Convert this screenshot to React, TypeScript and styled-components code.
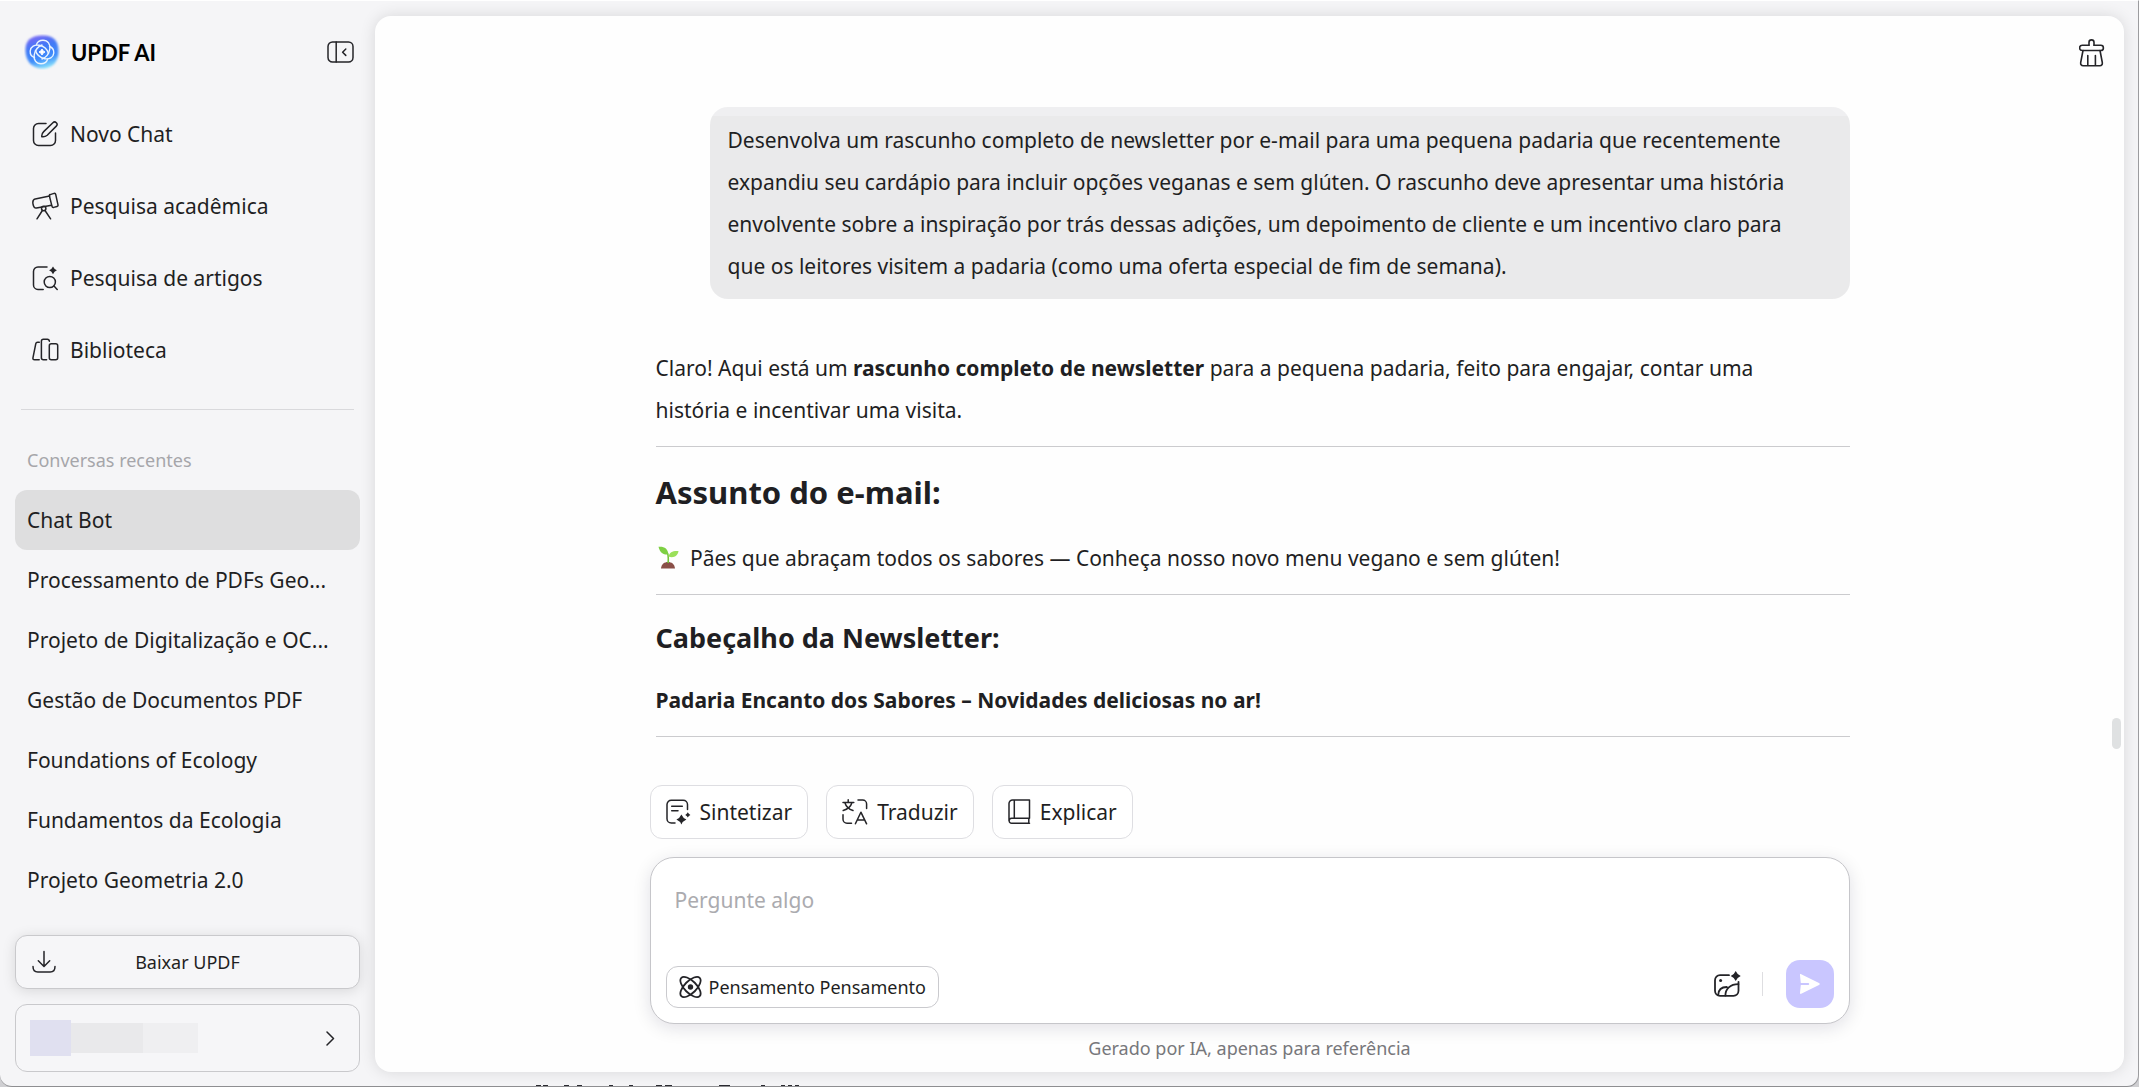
import React from "react";
import styled, { createGlobalStyle } from "styled-components";

const GlobalStyle = createGlobalStyle`
  *, *::before, *::after { box-sizing: border-box; }
  body {
    margin: 0;
    background: #cfcfd2;
    color: #1f1f23;
    font-family: "Noto Sans", "Open Sans", sans-serif;
    font-size: 21px;
  }
  button, textarea { font: inherit; color: inherit; }
  button { cursor: pointer; }
`;

/* ---------- window frame ---------- */

const Window = styled.div`
  position: relative;
  display: grid;
  grid-template-columns: 375px minmax(0, 1fr);
  min-height: 100vh;
  background: #f5f5f7;
  border-top: 1px solid #ffffff;
  border-right: 1px solid #9c9c9f;
  border-bottom: 1px solid #8e8e91;
  border-radius: 0 0 12px 12px;
  overflow: hidden;
`;

const Behind = styled.svg`
  position: absolute;
  left: 535px;
  bottom: 0;
`;

/* ---------- sidebar ---------- */

const Sidebar = styled.aside`
  display: flex;
  flex-direction: column;
  padding: 33px 15px 14px;
`;

const BrandRow = styled.header`
  display: flex;
  align-items: center;
  height: 36px;
  padding: 0 6px 0 9px;
`;

const BrandName = styled.span`
  flex: 1;
  padding-left: 11px;
  color: #000;
  font-family: Lato, Inter, sans-serif;
  font-size: 22px;
  font-weight: 700;
`;

const IconButton = styled.button`
  display: flex;
  padding: 0;
  border: 0;
  background: none;
`;

const Nav = styled.nav`
  display: flex;
  flex-direction: column;
  margin-top: 28px;
`;

const NavItem = styled.button`
  display: grid;
  grid-template-columns: 26px 1fr;
  align-items: center;
  gap: 12px;
  height: 72px;
  padding: 0 17px;
  border: 0;
  background: none;
  text-align: left;
`;

const Divider = styled.hr`
  width: calc(100% - 12px);
  height: 1px;
  margin: 23px 6px 35px;
  border: 0;
  background: #d9d9dc;
`;

const SectionTitle = styled.h2`
  margin: 0 12px 15px;
  color: #a6a6aa;
  font-size: 18px;
  font-weight: 400;
  line-height: 30px;
`;

const ChatList = styled.ul`
  flex: 1;
  margin: 0;
  padding: 0;
  list-style: none;
`;

const ChatItem = styled.button<{ $active?: boolean }>`
  display: block;
  width: 100%;
  height: 60px;
  padding: 0 12px;
  border: 0;
  border-radius: 12px;
  background: ${(p) => (p.$active ? "#dededf" : "none")};
  text-align: left;
  white-space: nowrap;
  overflow: hidden;
  text-overflow: ellipsis;
`;

const DownloadButton = styled.button`
  display: grid;
  grid-template-columns: 24px 1fr 24px;
  align-items: center;
  height: 54px;
  margin-bottom: 15px;
  padding: 0 16px;
  border: 1px solid #c9c9cc;
  border-radius: 12px;
  background: #f6f6f8;
  box-shadow: 0 2px 14px rgba(0, 0, 0, 0.12);
  font-size: 18px;
`;

const AccountButton = styled.button`
  display: flex;
  align-items: center;
  height: 68px;
  padding: 0 24px 0 14px;
  border: 1px solid #c9c9cc;
  border-radius: 12px;
  background: #f6f6f8;
`;

const Redacted = styled.span`
  flex: 1;
  display: flex;
  align-items: center;
`;

const Block = styled.span<{ $w: number; $h: number; $c: string }>`
  width: ${(p) => p.$w}px;
  height: ${(p) => p.$h}px;
  background: ${(p) => p.$c};
`;

/* ---------- main panel ---------- */

const Panel = styled.main`
  position: relative;
  display: flex;
  flex-direction: column;
  margin: 15px 14px 14px 0;
  border-radius: 16px;
  background: #fefefe;
  box-shadow: 0 0 16px rgba(0, 0, 0, 0.12);
`;

const PanelHeader = styled.header`
  display: flex;
  align-items: flex-start;
  justify-content: flex-end;
  height: 91px;
  padding: 23px 19px 0;
`;

const ScrollThumb = styled.div`
  position: absolute;
  top: 702px;
  right: 3px;
  width: 9px;
  height: 31px;
  border-radius: 5px;
  background: #dfe1e2;
`;

const Column = styled.div`
  display: flex;
  flex-direction: column;
  flex: 1;
  width: 100%;
  max-width: 1200px;
  margin: 0 auto;
`;

const Thread = styled.section`
  flex: 1;
  display: flex;
  flex-direction: column;
  padding-left: 6px;
`;

const UserBubble = styled.p`
  align-self: flex-end;
  max-width: 1140px;
  margin: 0;
  padding: 12px 32px 12px 18px;
  border-radius: 18px;
  background: linear-gradient(#efeff1 9px, #eaeaeb 9px);
  line-height: 42px;
`;

const Answer = styled.article`
  margin-top: 48px;
  line-height: 42px;

  p { margin: 0; max-width: 1160px; }
  h2 { margin: 21px 0; font-size: 31px; line-height: 48px; }
  h3 { margin: 21px 0 19px; font-size: 27px; line-height: 44px; }
  hr { height: 1px; margin: 15px 0 0; border: 0; background: #cbcbce; }
`;

const Emoji = styled.svg`
  margin: 0 6px 0 2px;
  vertical-align: -3px;
`;

const Chips = styled.div`
  display: flex;
  gap: 18px;
  margin-bottom: 18px;
`;

const Chip = styled.button`
  display: flex;
  align-items: center;
  gap: 9px;
  height: 54px;
  padding: 0 15px;
  border: 1px solid #dedee2;
  border-radius: 12px;
  background: #fff;
`;

const Composer = styled.form`
  display: flex;
  flex-direction: column;
  height: 167px;
  padding: 21px 15px 15px;
  border: 1px solid #c6c6ca;
  border-radius: 24px;
  background: #fff;
  box-shadow: 0 4px 18px rgba(20, 10, 50, 0.12);
`;

const Prompt = styled.textarea`
  flex: 1;
  width: 100%;
  padding: 0 9px;
  border: 0;
  outline: 0;
  background: none;
  line-height: 42px;
  resize: none;
  overflow: hidden;
  &::placeholder { color: #ababaf; opacity: 1; }
`;

const Tools = styled.div`
  display: flex;
  align-items: flex-end;
`;

const ThinkButton = styled.button`
  display: flex;
  align-items: center;
  gap: 7px;
  height: 42px;
  padding: 0 12px;
  border: 1px solid #cacace;
  border-radius: 12px;
  background: #fff;
  font-size: 18px;
`;

const Actions = styled.div`
  display: flex;
  align-items: center;
  margin-left: auto;
`;

const Separator = styled.span`
  width: 1px;
  height: 24px;
  margin: 0 23px 0 21px;
  background: #dedee1;
`;

const SendButton = styled.button`
  display: flex;
  align-items: center;
  justify-content: center;
  width: 48px;
  height: 48px;
  padding: 0;
  border: 0;
  border-radius: 14px;
  background: #c9c6ff;
`;

const Disclaimer = styled.footer`
  margin: 12px 0;
  color: #77777b;
  font-size: 18px;
  line-height: 24px;
  text-align: center;
`;

/* ---------- icons ---------- */

type IconProps = { w: number; h: number; sw?: number; children: React.ReactNode };

const Icon = ({ w, h, sw = 1.5, children }: IconProps) => (
  <svg
    width={w}
    height={h}
    viewBox={`0 0 ${w} ${h}`}
    fill="none"
    stroke="#242428"
    strokeWidth={sw}
    strokeLinecap="round"
    strokeLinejoin="round"
    aria-hidden="true"
  >
    {children}
  </svg>
);

const Spark = ({ x, y, r }: { x: number; y: number; r: number }) => {
  const k = r * 0.3;
  return (
    <path
      fill="#242428"
      stroke="none"
      d={`M${x} ${y - r}Q${x + k} ${y - k} ${x + r} ${y}Q${x + k} ${y + k} ${x} ${y + r}Q${x - k} ${y + k} ${x - r} ${y}Q${x - k} ${y - k} ${x} ${y - r}Z`}
    />
  );
};

const LogoMark = () => (
  <svg width="36" height="36" viewBox="0 0 36 36" aria-hidden="true">
    <defs>
      <linearGradient id="logo-fill" x1="0.3" y1="0" x2="0.6" y2="1">
        <stop offset="0" stopColor="#7a68f4" />
        <stop offset="0.35" stopColor="#4179f6" />
        <stop offset="0.7" stopColor="#3f8dfb" />
        <stop offset="1" stopColor="#8be4fb" />
      </linearGradient>
      <filter id="logo-soft" x="-20%" y="-20%" width="140%" height="140%">
        <feGaussianBlur stdDeviation="1.1" />
      </filter>
    </defs>
    <path
      d="M18 1.5c11-.5 16.5 5 16.5 15.5 0 11-6 17.5-16 17.5S2 28 1.5 17C1 6 7 2 18 1.5z"
      fill="url(#logo-fill)"
      filter="url(#logo-soft)"
    />
    <g fill="none" stroke="#e9f4ff" strokeWidth="1.4" strokeLinecap="round">
      <path d="M12.5 10.5C13.5 7.5 16 6.3 19 6.3c5 0 7.5 4.2 6.8 8.7-.8 5-4 8.500-7.800 10" />
      <path d="M25.5 12.5c3 1 4.5 3.5 4.3 6.500-.4 4.500-4.600 6.600-9 5.700-5-1-8.200-4.400-9.300-8.200" />
      <path d="M23.5 25.5c-1 3-3.5 4.2-6.500 4.200-5 0-7.500-4.200-6.800-8.700.8-5 4-8.500 7.800-10" />
      <path d="M10.5 23.5c-3-1-4.500-3.500-4.300-6.500.4-4.500 4.600-6.600 9-5.700 5 1 8.200 4.400 9.300 8.200" />
    </g>
    <path d="M18 15Q18.7 17.3 21 18 18.7 18.7 18 21 17.3 18.7 15 18 17.3 17.3 18 15Z" fill="#fff" stroke="#fff" />
  </svg>
);

const CollapseIcon = () => (
  <Icon w={27} h={22}>
    <rect x="1" y="1" width="25" height="20" rx="4.5" />
    <path d="M9.2 1v20M18.800 8l-3.200 3.200 3.200 3.200" />
  </Icon>
);

const EditIcon = () => (
  <Icon w={26} h={26}>
    <path d="M14 2.500H6.500a5 5 0 0 0-5 5v12a5 5 0 0 0 5 5h12a5 5 0 0 0 5-5V12" />
    <path d="M9.800 15.700c-.3-2.200.4-3.600 1.900-5.100l9.200-8.900a2.400 2.400 0 0 1 3.400 3.400l-9.100 9.100c-1.400 1.300-3 1.900-5.400 1.500z" />
  </Icon>
);

const TelescopeIcon = () => (
  <Icon w={27} h={28}>
    <path d="M17.600 3.900 3.200 6.900C1 7.500.5 9.300 1 12c.5 2.900 1.600 4.400 3.500 4l15-2.800" />
    <path d="M18.200 2.600 22 1.400c.9-.2 1.500.1 1.700 1L26 12.800c.2.900-.2 1.500-1 1.700l-3.300.9c-.9.200-1.500-.1-1.700-1L17.400 4c-.2-.8 0-1.200.8-1.400z" />
    <circle cx="11.7" cy="16.5" r="2.2" />
    <path d="M10.400 18.500 5 26.800M13 18.500l5.600 8.300" />
  </Icon>
);

const ArticleSearchIcon = () => (
  <Icon w={26} h={26}>
    <path d="M15 2H6a4.500 4.500 0 0 0-4.500 4.500v13.400A4.500 4.500 0 0 0 6 24.400h5.200" />
    <circle cx="17.8" cy="17" r="5.6" />
    <path d="m22 21 3.200 3.400" />
    <Spark x={21} y={5.3} r={3.9} />
  </Icon>
);

const LibraryIcon = () => (
  <Icon w={27} h={26}>
    <path d="M7.300 5.300H5.600C4.600 5.300 4 5.700 3.800 6.700L1 20.600c-.3 1.400.2 2.100 1.600 2.100h4.600" />
    <path d="M14.600 22.700h-3.200a2 2 0 0 1-2-2V4.300a2 2 0 0 1 2-2h4a2 2 0 0 1 2 2" />
    <rect x="17.3" y="6.8" width="8.4" height="15.9" rx="2" />
  </Icon>
);

const DownloadIcon = () => (
  <Icon w={24} h={24}>
    <path d="M12 1.500v14.800M6.300 10.800 12 16.500l5.700-5.700M1 16.500c0 3.500 1.200 5.500 4.800 5.500h12.400c3.600 0 4.800-2 4.800-5.500" />
  </Icon>
);

const ChevronIcon = () => (
  <Icon w={9} h={15}>
    <path d="m1 1 6.500 6.500L1 14" />
  </Icon>
);

const BroomIcon = () => (
  <Icon w={26} h={28} sw={1.6}>
    <path d="M10 6.300V3.400a2.500 2.500 0 0 1 5 0v2.900" />
    <path d="M10 6.300H3.200a2.600 2.600 0 0 0 0 5.200h18.600a2.600 2.600 0 0 0 0-5.200H15" />
    <path d="m4 11.500-2.300 12c-.3 2 .5 3.200 2.500 3.200h16.600c2 0 2.800-1.200 2.500-3.200L21 11.500M8.800 16.500v10.200M16.400 16.500v10.200" />
  </Icon>
);

const SummaryIcon = () => (
  <Icon w={25} h={26}>
    <path d="M9 24H5.300A4.300 4.300 0 0 1 1 19.700V5.600a4.300 4.300 0 0 1 4.300-4.300h11.900a4.300 4.300 0 0 1 4.300 4.300v5" />
    <path d="M5.700 7.300h10.600M5.700 11.800h6.300" />
    <Spark x={15.4} y={20.5} r={5} />
    <Spark x={21.8} y={15.9} r={2.6} />
  </Icon>
);

const TranslateIcon = () => (
  <Icon w={26} h={26}>
    <path d="M6.200.8v2.600M1 3.600h10.800M3 4c1 3.400 4 6.300 8 7.500M9.800 4c-1 3.400-4.300 6.300-8.600 7.500" />
    <path d="M16 1h4.600a4 4 0 0 1 4 4v4.500M1 15.800v4.400a4 4 0 0 0 4 4h4.500" />
    <path d="m13.400 24.800 5.500-11.600 5.700 11.600M15.200 21h7.600" />
  </Icon>
);

const BookIcon = () => (
  <Icon w={23} h={26}>
    <path d="M21.500 19.300V1H4.600A3.600 3.600 0 0 0 1 4.600v17.100M6.300 1v18.300M21.500 19.300H3.600a2.500 2.500 0 0 0 0 5h17.900M20.800 19.300v5" />
  </Icon>
);

const AtomIcon = () => (
  <Icon w={23} h={24} sw={1.8}>
    <ellipse cx="11.5" cy="12" rx="13" ry="6" transform="rotate(45 11.5 12)" />
    <ellipse cx="11.5" cy="12" rx="13" ry="6" transform="rotate(-45 11.5 12)" />
    <circle cx="11.5" cy="12" r="2.7" fill="#242428" stroke="none" />
  </Icon>
);

const ImageIcon = () => (
  <Icon w={27} h={28} sw={1.8}>
    <path d="M15 5.200H6a5 5 0 0 0-5 5v10.600a5 5 0 0 0 5 5h13.500a5 5 0 0 0 5-5v-9" />
    <circle cx="6.6" cy="10.6" r="1.5" fill="#242428" stroke="none" />
    <path d="M4.200 25c.2-5 3.500-8 8.600-8M11.400 25.500c0-6.500 4.800-11.300 13-11.300" />
    <Spark x={21.7} y={6} r={5} />
  </Icon>
);

const SendIcon = () => (
  <svg width="22" height="22" viewBox="0 0 22 22" aria-hidden="true">
    <path d="M2.200 1.200 20 10c1 .5 1 1.500 0 2L2.200 20.800c-.9.400-1.400 0-1.200-1l.8-7.800h7.400a1 1 0 0 0 0-2H1.800L1 2.200c-.2-1 .3-1.400 1.200-1z" fill="#fff" />
  </svg>
);

const Seedling = () => (
  <Emoji width="21" height="23" viewBox="0 0 21 23" role="img" aria-label="Muda">
    <path d="M3 22.500c.4-4.500 3.500-6.500 7-6.500s6.600 2 7 6.500z" fill="#8a5048" />
    <path d="M9.300 17c.3-3 .4-6-.5-10l1.600.3c.8 3 .8 6.500.6 9.700z" fill="#74c53a" />
    <path d="M10.300 8.300C8 9 2 8.500.5.800 6 .2 10 2.500 10.300 8.300z" fill="#7ed043" />
    <path d="M10.500 10.500C11.500 5.800 15 4.600 20.500 5c-.5 4.800-5 7.500-10 5.500z" fill="#9be05a" />
  </Emoji>
);

/* ---------- data ---------- */

const navItems = [
  { label: "Novo Chat", icon: <EditIcon /> },
  { label: "Pesquisa acadêmica", icon: <TelescopeIcon /> },
  { label: "Pesquisa de artigos", icon: <ArticleSearchIcon /> },
  { label: "Biblioteca", icon: <LibraryIcon /> },
];

const chats = [
  "Chat Bot",
  "Processamento de PDFs Geo...",
  "Projeto de Digitalização e OC...",
  "Gestão de Documentos PDF",
  "Foundations of Ecology",
  "Fundamentos da Ecologia",
  "Projeto Geometria 2.0",
];

const quickActions = [
  { label: "Sintetizar", icon: <SummaryIcon /> },
  { label: "Traduzir", icon: <TranslateIcon /> },
  { label: "Explicar", icon: <BookIcon /> },
];

export default function App() {
  return (
    <>
      <GlobalStyle />
      <Window>
        <Sidebar>
          <BrandRow>
            <LogoMark />
            <BrandName>UPDF AI</BrandName>
            <IconButton aria-label="Recolher menu">
              <CollapseIcon />
            </IconButton>
          </BrandRow>
          <Nav>
            {navItems.map((item) => (
              <NavItem key={item.label}>
                {item.icon}
                {item.label}
              </NavItem>
            ))}
          </Nav>
          <Divider />
          <SectionTitle>Conversas recentes</SectionTitle>
          <ChatList>
            {chats.map((name, i) => (
              <li key={name}>
                <ChatItem $active={i === 0}>{name}</ChatItem>
              </li>
            ))}
          </ChatList>
          <DownloadButton>
            <DownloadIcon />
            <span>Baixar UPDF</span>
          </DownloadButton>
          <AccountButton aria-label="Conta">
            <Redacted>
              <Block $w={41} $h={36} $c="#e0e0f0" />
              <Block $w={72} $h={30} $c="#e9e9eb" />
              <Block $w={55} $h={30} $c="#efeff1" />
            </Redacted>
            <ChevronIcon />
          </AccountButton>
        </Sidebar>

        <Panel>
          <PanelHeader>
            <IconButton aria-label="Limpar conversa">
              <BroomIcon />
            </IconButton>
          </PanelHeader>
          <Column>
            <Thread>
              <UserBubble>
                Desenvolva um rascunho completo de newsletter por e-mail para uma pequena padaria que
                recentemente expandiu seu cardápio para incluir opções veganas e sem glúten. O rascunho
                deve apresentar uma história envolvente sobre a inspiração por trás dessas adições, um
                depoimento de cliente e um incentivo claro para que os leitores visitem a padaria (como
                uma oferta especial de fim de semana).
              </UserBubble>
              <Answer>
                <p>
                  Claro! Aqui está um <strong>rascunho completo de newsletter</strong> para a pequena
                  padaria, feito para engajar, contar uma história e incentivar uma visita.
                </p>
                <hr />
                <h2>Assunto do e-mail:</h2>
                <p>
                  <Seedling /> Pães que abraçam todos os sabores — Conheça nosso novo menu vegano e sem
                  glúten!
                </p>
                <hr />
                <h3>Cabeçalho da Newsletter:</h3>
                <p>
                  <strong>Padaria Encanto dos Sabores – Novidades deliciosas no ar!</strong>
                </p>
                <hr />
              </Answer>
            </Thread>
            <Chips>
              {quickActions.map((action) => (
                <Chip key={action.label}>
                  {action.icon}
                  {action.label}
                </Chip>
              ))}
            </Chips>
            <Composer>
              <Prompt aria-label="Pergunte algo" placeholder="Pergunte algo" rows={1} />
              <Tools>
                <ThinkButton type="button">
                  <AtomIcon />
                  Pensamento Pensamento
                </ThinkButton>
                <Actions>
                  <IconButton type="button" aria-label="Adicionar imagem">
                    <ImageIcon />
                  </IconButton>
                  <Separator />
                  <SendButton type="button" aria-label="Enviar">
                    <SendIcon />
                  </SendButton>
                </Actions>
              </Tools>
            </Composer>
            <Disclaimer>Gerado por IA, apenas para referência</Disclaimer>
          </Column>
          <ScrollThumb />
        </Panel>
        <Behind width="270" height="1" aria-hidden="true">
          <path
            d="M1 .5h5M8 .5h5M29 .5h5M42 .5h5M74 .5h4M94 .5h4M121 .5h6M130 .5h7M184 .5h11M226 .5h4M246 .5h4M253 .5h4M260 .5h4"
            stroke="#2a2a30"
          />
        </Behind>
      </Window>
    </>
  );
}
